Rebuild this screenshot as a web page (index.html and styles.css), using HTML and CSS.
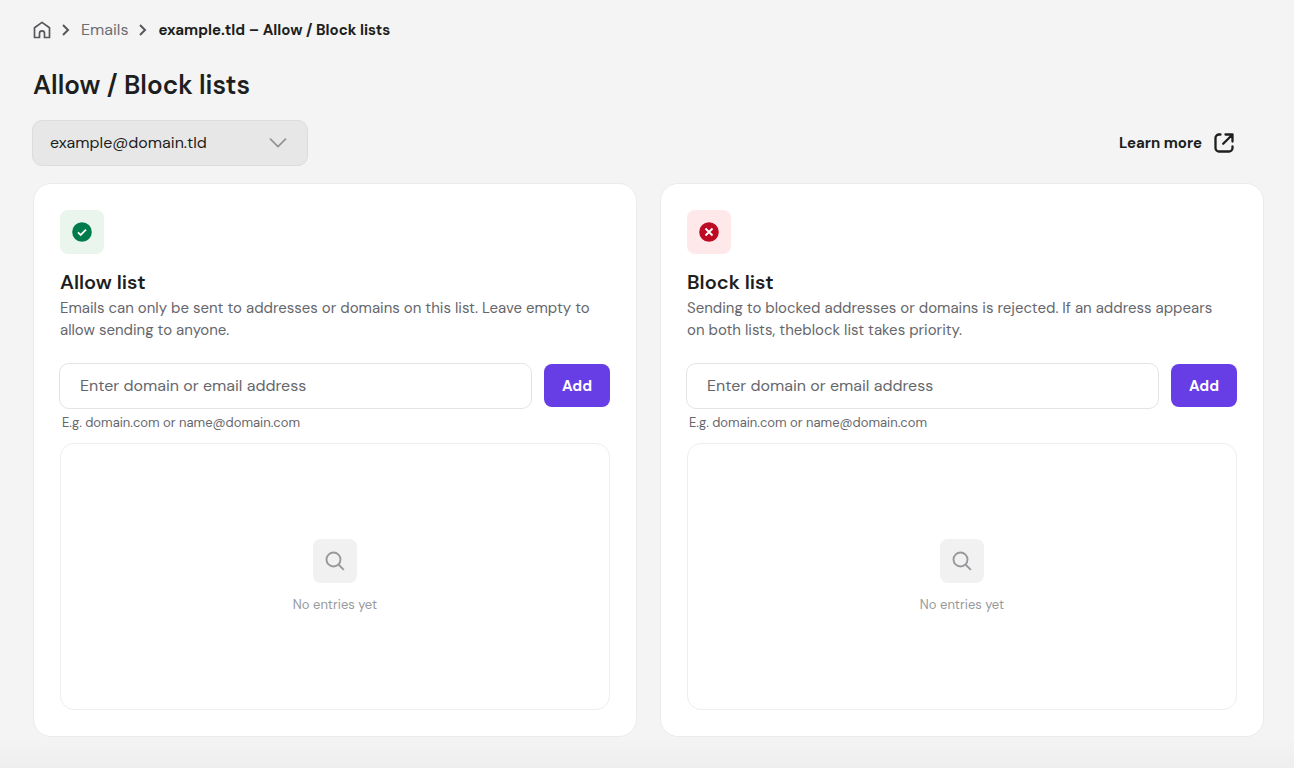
FILE: index.html
```html
<!DOCTYPE html>
<html lang="en">
<head>
    <meta charset="UTF-8">
    <meta name="viewport" content="width=device-width, initial-scale=1.0">
    <title>Allow / Block lists</title>
    <link rel="stylesheet" href="styles.css">
</head>
<body>
    <main class="page">
        <nav class="breadcrumb">
            <a href="#" class="home" aria-label="Home">
                <svg width="18" height="18" viewBox="0 0 18 18" fill="none" stroke="currentColor" stroke-width="1.700" stroke-linejoin="round">
                    <path d="M1.500 6.700 9 1.400l7.500 5.300v9.800h-5v-4.200a2.500 2.500 0 0 0-5 0v4.200h-5z"/>
                </svg>
            </a>
            <svg class="separator" width="8" height="14" viewBox="0 0 8 14" fill="none" stroke="currentColor" stroke-width="2">
                <path d="M1 2l5 5-5 5"/>
            </svg>
            <a href="#">Emails</a>
            <svg class="separator" width="8" height="14" viewBox="0 0 8 14" fill="none" stroke="currentColor" stroke-width="2">
                <path d="M1 2l5 5-5 5"/>
            </svg>
            <span class="current">example.tld – Allow / Block lists</span>
        </nav>

        <h1 id="page-title">Allow / Block lists</h1>

        <div class="toolbar">
            <div class="select-wrap">
                <select id="mailbox" aria-labelledby="page-title">
                    <option>example@domain.tld</option>
                </select>
                <svg width="18" height="10" viewBox="0 0 18 10" fill="none" stroke="currentColor" stroke-width="1.700" stroke-linecap="round" stroke-linejoin="round">
                    <path d="M1.500 1.200 9 8.700l7.500-7.500"/>
                </svg>
            </div>
            <a href="#" class="learn-more">
                Learn more
                <svg width="20" height="20" viewBox="0 0 20 20" fill="none" stroke="currentColor" stroke-width="2.300" stroke-linecap="round" stroke-linejoin="round">
                    <path d="M6.500 1.500H5a3.500 3.500 0 0 0-3.500 3.500v10A3.500 3.500 0 0 0 5 18.500h10a3.500 3.500 0 0 0 3.500-3.500v-1.500"/>
                    <path d="M11.500 1.500h7v7M18 2 9.200 10.800"/>
                </svg>
            </a>
        </div>

        <div class="lists">
            <section class="card">
                <div class="icon-box allow">
                    <svg width="20" height="20" viewBox="0 0 20 20" fill="none">
                        <circle cx="10" cy="10" r="9.800" fill="currentColor"/>
                        <path d="M6 10.300l2.700 2.600 5.300-5.200" stroke="#fff" stroke-width="1.800"/>
                    </svg>
                </div>
                <h2 id="allow-title">Allow list</h2>
                <p class="description">Emails can only be sent to addresses or domains on this list. Leave empty to allow sending to anyone.</p>
                <form class="entry-form">
                    <input type="text" id="allow-entry" placeholder="Enter domain or email address" aria-labelledby="allow-title" aria-describedby="allow-hint">
                    <button type="button">Add</button>
                </form>
                <p class="hint" id="allow-hint">E.g. domain.com or name@domain.com</p>
                <div class="entries">
                    <div class="icon-box empty">
                        <svg width="20" height="20" viewBox="0 0 20 20" fill="none" stroke="currentColor" stroke-width="1.900">
                            <circle cx="8.500" cy="8.500" r="7"/>
                            <path d="M13.500 13.500l5.300 5.300"/>
                        </svg>
                    </div>
                    <p>No entries yet</p>
                </div>
            </section>

            <section class="card">
                <div class="icon-box block">
                    <svg width="20" height="20" viewBox="0 0 20 20" fill="none">
                        <circle cx="10" cy="10" r="9.800" fill="currentColor"/>
                        <path d="M6.500 6.500l7 7M13.500 6.500l-7 7" stroke="#fff" stroke-width="1.900"/>
                    </svg>
                </div>
                <h2 id="block-title">Block list</h2>
                <p class="description">Sending to blocked addresses or domains is rejected. If an address appears on both lists, theblock list takes priority.</p>
                <form class="entry-form">
                    <input type="text" id="block-entry" placeholder="Enter domain or email address" aria-labelledby="block-title" aria-describedby="block-hint">
                    <button type="button">Add</button>
                </form>
                <p class="hint" id="block-hint">E.g. domain.com or name@domain.com</p>
                <div class="entries">
                    <div class="icon-box empty">
                        <svg width="20" height="20" viewBox="0 0 20 20" fill="none" stroke="currentColor" stroke-width="1.900">
                            <circle cx="8.500" cy="8.500" r="7"/>
                            <path d="M13.500 13.500l5.300 5.300"/>
                        </svg>
                    </div>
                    <p>No entries yet</p>
                </div>
            </section>
        </div>
    </main>
</body>
</html>
```

FILE: styles.css
```css
* {
    box-sizing: border-box;
}

body {
    margin: 0;
    min-height: 100vh;
    font-family: "DM Sans", Inter, sans-serif;
    font-size: 15px;
    line-height: 22px;
    color: #1d1e20;
    background: linear-gradient(to top, #eeeeee, #f4f4f4 32px) #f4f4f4;
}

h1, h2, p {
    margin: 0;
}

a {
    color: inherit;
    text-decoration: none;
}

svg {
    display: block;
    flex-shrink: 0;
}

input, select, button {
    font: inherit;
    color: inherit;
}

.page {
    display: flex;
    flex-direction: column;
    min-height: 100vh;
    padding: 19px 30px 31px 33px;
}

/* Breadcrumb */
.breadcrumb {
    display: flex;
    align-items: center;
    gap: 11px;
    font-size: 16px;
    color: #6d6e73;
}

.home, .separator {
    color: #56575c;
}

.current {
    font-size: 15px;
    font-weight: 700;
    color: #1d1e20;
}

h1 {
    margin-top: 28px;
    font-size: 26px;
    line-height: 32px;
    font-weight: 600;
}

/* Mailbox picker and help link */
.toolbar {
    display: flex;
    justify-content: space-between;
    align-items: center;
    margin: 19px 30px 17px -1px;
}

.select-wrap {
    display: grid;
    grid-template-columns: 276px;
    align-items: center;
}

.select-wrap select, .select-wrap svg {
    grid-area: 1 / 1;
}

.select-wrap select {
    appearance: none;
    height: 46px;
    padding: 0 48px 0 17px;
    border: 1px solid #dcdcdc;
    border-radius: 10px;
    background-color: #e7e7e7;
    font-size: 16px;
}

.select-wrap svg {
    justify-self: end;
    margin-right: 21px;
    color: #929398;
    pointer-events: none;
}

.learn-more {
    display: flex;
    align-items: center;
    gap: 12px;
    font-weight: 700;
}

/* Cards */
.lists {
    flex: 1;
    display: grid;
    grid-template-columns: 1fr 1fr;
    gap: 23px;
}

.card {
    display: flex;
    flex-direction: column;
    padding: 26px;
    border: 1px solid #ebebeb;
    border-radius: 18px;
    background-color: #fff;
}

.icon-box {
    display: flex;
    justify-content: center;
    align-items: center;
    width: 44px;
    height: 44px;
    border-radius: 8px;
}

.allow {
    color: #007b4b;
    background-color: #eaf5ed;
}

.block {
    color: #bd0b23;
    background-color: #ffe8ea;
}

.empty {
    color: #98999d;
    background-color: #f1f1f1;
}

h2 {
    margin: 15px 0 2px;
    font-size: 20px;
    line-height: 26px;
    font-weight: 600;
}

.description {
    padding-right: 6px;
    color: #66676c;
}

.entry-form {
    display: flex;
    align-items: flex-start;
    gap: 12px;
    margin: 22px 0 4px -1px;
}

.entry-form input {
    flex: 1;
    min-width: 0;
    height: 46px;
    padding: 0 20px 2px;
    border: 1px solid #e4e4e5;
    border-radius: 10px;
    background-color: #fff;
    font-size: 16px;
}

.entry-form input::placeholder {
    color: #66676c;
    opacity: 1;
}

.entry-form button {
    width: 66px;
    height: 43px;
    margin-top: 1px;
    padding: 0;
    border: none;
    border-radius: 8px;
    background-color: #673de6;
    color: #fff;
    font-weight: 700;
    cursor: pointer;
}

.hint {
    padding-left: 2px;
    font-size: 13px;
    line-height: 20px;
    color: #66676c;
}

.entries {
    flex: 1;
    display: flex;
    flex-direction: column;
    justify-content: center;
    align-items: center;
    gap: 12px;
    margin-top: 10px;
    border: 1px solid #eeeeee;
    border-radius: 14px;
    font-size: 13px;
    line-height: 20px;
    color: #98999d;
}
```
